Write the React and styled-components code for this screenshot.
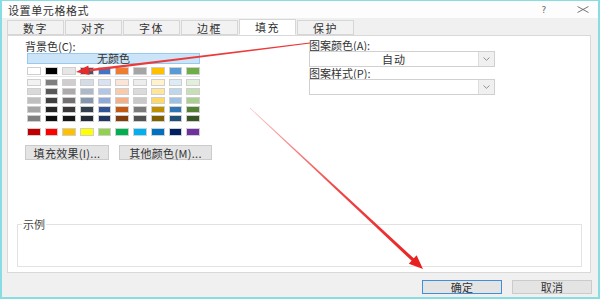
import React from 'react';
import styled, { createGlobalStyle } from 'styled-components';

const Global = createGlobalStyle`
  html, body { margin: 0; padding: 0; background: #ffffff; }
  body { font-family: "Noto Sans CJK SC", "Noto Sans", sans-serif; }
  * { box-sizing: border-box; }
`;

const Window = styled.div`
  position: relative;
  width: 600px;
  height: 299px;
  border: 2px solid #86dde2;
  border-top-width: 1px;
  display: flex;
  flex-direction: column;
  background: #f0f0f0;
  color: #333;
  font-size: 11px;
  overflow: hidden;
`;

const TitleBar = styled.div`
  height: 17px;
  flex: none;
  background: #fdfdfd;
  display: flex;
  align-items: center;
  padding-left: 6px;
`;

const Title = styled.span`
  font-size: 11px;
  letter-spacing: 0.6px;
  color: #333;
  line-height: 12px;
`;

const TitleButtons = styled.div`
  margin-left: auto;
  display: flex;
  align-items: center;
  gap: 26px;
  padding-right: 9px;
`;

const Help = styled.span`
  width: 14px;
  text-align: center;
  font-family: "DejaVu Sans", sans-serif;
  font-size: 9px;
  color: #666;
`;

const Close = styled.svg`
  display: block;
`;

const Body = styled.div`
  flex: 1;
  display: flex;
  flex-direction: column;
  padding: 2px 5px 0 5px;
`;

const TabRow = styled.div`
  display: flex;
  gap: 1px;
  height: 15px;
  position: relative;
  z-index: 1;
`;

const Tab = styled.div`
  width: 57px;
  height: ${p => (p.$active ? '16px' : '15px')};
  margin-top: ${p => (p.$active ? '-1px' : '0')};
  display: flex;
  align-items: center;
  justify-content: center;
  background: ${p => (p.$active ? '#ffffff' : '#f2f2f2')};
  border: 1px solid #d6d6d6;
  border-bottom: ${p => (p.$active ? '1px solid #ffffff' : '1px solid #d6d6d6')};
  font-size: 11px;
  letter-spacing: 1.5px;
  color: #333;
`;

const Panel = styled.div`
  width: 584px;
  height: 238px;
  flex: none;
  background: #ffffff;
  border: 1px solid #d9d9d9;
  display: flex;
  flex-direction: column;
`;

const Top = styled.div`
  display: flex;
  padding: 4px 0 0 17px;
`;

const LeftCol = styled.div`
  width: 190px;
  display: flex;
  flex-direction: column;
`;

const RightCol = styled.div`
  width: 186px;
  margin-left: 94px;
  display: flex;
  flex-direction: column;
`;

const Label = styled.div`
  height: ${p => p.$h || 12}px;
  line-height: ${p => p.$h || 12}px;
  font-size: 11px;
  color: #333;
  white-space: nowrap;
`;

const NoColor = styled.div`
  margin: 1px 0 0 2px;
  width: 173px;
  height: 11px;
  line-height: 9px;
  text-align: center;
  background: #cce4f7;
  border: 1px solid #99c9ef;
  font-size: 11px;
  color: #333;
`;

const Palette = styled.div`
  margin: 3px 0 0 2px;
  width: 173px;
  display: flex;
  flex-direction: column;
`;

const SwatchGrid = styled.div`
  display: grid;
  grid-template-columns: repeat(10, 1fr);
  column-gap: 4px;
  row-gap: 2px;
  grid-auto-rows: ${p => p.$rowH}px;
  margin-top: ${p => p.$mt || 0}px;
`;

const Swatch = styled.div`
  background: ${p => p.$c};
  border: 1px solid #cfcfcf;
`;

const Sep = styled.div`
  height: 1px;
  margin-top: 1px;
  background: #e6e6e6;
`;

const ButtonRow = styled.div`
  display: flex;
  gap: 10px;
  margin-top: 9px;
`;

const Button = styled.div`
  width: ${p => p.$w}px;
  height: ${p => p.$h || 15}px;
  display: flex;
  align-items: center;
  justify-content: center;
  background: #e4e4e4;
  border: 1px solid ${p => (p.$focus ? '#3f8fdc' : '#cbcbcb')};
  font-size: 11px;
  letter-spacing: 0.3px;
  color: #333;
  white-space: nowrap;
`;

const Select = styled.div`
  height: 16px;
  display: flex;
  background: #ffffff;
  border: 1px solid #d0d0d0;
`;

const SelectValue = styled.div`
  flex: 1;
  text-align: center;
  line-height: 14px;
  font-size: 11px;
  letter-spacing: 1px;
  color: #333;
`;

const DropBtn = styled.div`
  width: 16px;
  display: flex;
  align-items: center;
  justify-content: center;
  background: #f0f0f0;
  border-left: 1px solid #dcdcdc;
`;

const Sample = styled.fieldset`
  margin: auto 8px 5px 9px;
  height: 49px;
  padding: 0;
  border: 1px solid #e2e2e2;
`;

const Legend = styled.legend`
  margin-left: 4px;
  padding: 0 1px;
  font-size: 11px;
  line-height: 12px;
  color: #444;
`;

const Footer = styled.div`
  display: flex;
  justify-content: flex-end;
  gap: 10px;
  padding: 7px 1px 0 0;
`;

const Overlay = styled.svg`
  position: absolute;
  top: -1px;
  left: -2px;
  pointer-events: none;
`;

const row1 = ['#FFFFFF', '#000000', '#E7E6E6', '#44546A', '#4472C4', '#ED7D31', '#A5A5A5', '#FFC000', '#5B9BD5', '#70AD47'];
const shades = [
  ['#F2F2F2', '#7F7F7F', '#D0CECE', '#D6DCE4', '#D9E1F2', '#FCE4D6', '#EDEDED', '#FFF2CC', '#DDEBF7', '#E2EFDA'],
  ['#D9D9D9', '#595959', '#AEAAAA', '#ACB9CA', '#B4C6E7', '#F8CBAD', '#DBDBDB', '#FFE699', '#BDD7EE', '#C6E0B4'],
  ['#BFBFBF', '#404040', '#757171', '#8497B0', '#8EA9DB', '#F4B084', '#C9C9C9', '#FFD966', '#9BC2E6', '#A9D08E'],
  ['#A6A6A6', '#262626', '#3A3838', '#333F4F', '#305496', '#C65911', '#7B7B7B', '#BF8F00', '#2F75B5', '#548235'],
  ['#808080', '#0D0D0D', '#161616', '#222B35', '#203764', '#833C0C', '#525252', '#806000', '#1F4E78', '#375623'],
];
const standard = ['#C00000', '#FF0000', '#FFC000', '#FFFF00', '#92D050', '#00B050', '#00B0F0', '#0070C0', '#002060', '#7030A0'];

const tabs = ['数字', '对齐', '字体', '边框', '填充', '保护'];

const Chevron = () => (
  <svg width="7" height="4" viewBox="0 0 7 4">
    <path d="M0.5 0.5 L3.5 3.3 L6.5 0.5" fill="none" stroke="#888" strokeWidth="0.9" />
  </svg>
);

export default function App() {
  return (
    <>
      <Global />
      <Window>
        <TitleBar>
          <Title>设置单元格格式</Title>
          <TitleButtons>
            <Help>?</Help>
            <Close width="12" height="7" viewBox="0 0 12 7">
              <path d="M0.5 0.5 L11.5 6.5 M11.5 0.5 L0.5 6.5" stroke="#666" strokeWidth="0.9" />
            </Close>
          </TitleButtons>
        </TitleBar>
        <Body>
          <TabRow>
            {tabs.map(t => (
              <Tab key={t} $active={t === '填充'}>{t}</Tab>
            ))}
          </TabRow>
          <Panel>
            <Top>
              <LeftCol>
                <Label>背景色(C):</Label>
                <NoColor>无颜色</NoColor>
                <Palette>
                  <SwatchGrid $rowH={8}>
                    {row1.map((c, i) => <Swatch key={i} $c={c} />)}
                  </SwatchGrid>
                  <Sep />
                  <SwatchGrid $rowH={7} $mt={2}>
                    {shades.flat().map((c, i) => <Swatch key={i} $c={c} />)}
                  </SwatchGrid>
                  <SwatchGrid $rowH={8} $mt={6}>
                    {standard.map((c, i) => <Swatch key={i} $c={c} />)}
                  </SwatchGrid>
                </Palette>
                <ButtonRow>
                  <Button $w={84}>填充效果(I)...</Button>
                  <Button $w={93}>其他颜色(M)...</Button>
                </ButtonRow>
              </LeftCol>
              <RightCol>
                <Label $h={11}>图案颜色(A):</Label>
                <Select>
                  <SelectValue>自动</SelectValue>
                  <DropBtn><Chevron /></DropBtn>
                </Select>
                <Label>图案样式(P):</Label>
                <Select>
                  <SelectValue />
                  <DropBtn><Chevron /></DropBtn>
                </Select>
              </RightCol>
            </Top>
            <Sample>
              <Legend>示例</Legend>
            </Sample>
          </Panel>
          <Footer>
            <Button $w={80} $h={14} $focus>确定</Button>
            <Button $w={80} $h={14}>取消</Button>
          </Footer>
        </Body>
        <Overlay width="600" height="299" viewBox="0 0 600 299">
          <defs>
            <linearGradient id="g2" x1="250" y1="108" x2="423" y2="269" gradientUnits="userSpaceOnUse">
              <stop offset="0" stopColor="#f04848" stopOpacity="0.35" />
              <stop offset="0.5" stopColor="#ee3030" stopOpacity="0.9" />
              <stop offset="1" stopColor="#e82020" />
            </linearGradient>
          </defs>
          <polygon points="309.9,42.4 310.1,43.6 89.6,71.6 89.3,69.0" fill="#ec3a3a" />
          <polygon points="76,72 88.3,65.6 89.5,75.1" fill="#e82a2a" />
          <polygon points="249.8,108.2 250.2,107.8 414.6,259.1 412.4,261.5" fill="url(#g2)" />
          <polygon points="423,269 408.8,263.7 416.6,255.3" fill="#e82020" />
        </Overlay>
      </Window>
    </>
  );
}
